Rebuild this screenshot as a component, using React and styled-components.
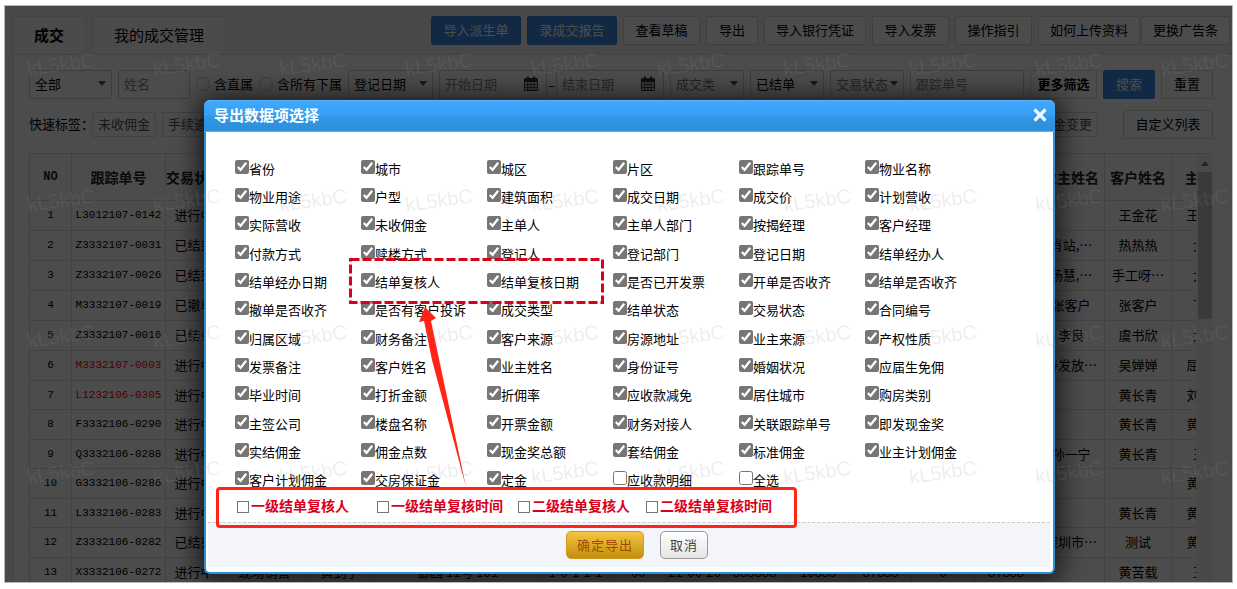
import styled, { createGlobalStyle } from 'styled-components';

const GlobalStyle = createGlobalStyle`
    * {
        box-sizing: border-box;
    }

    body {
        margin: 0;
        background: #fff;
        color: #000;
        font: 13px/18px 'Noto Sans CJK SC', sans-serif;
        overflow: hidden;
    }

    button,
    input,
    select {
        margin: 0;
        font: inherit;
    }
`;

const Frame = styled.div`
    position: relative;
    height: calc(100vh - 11px);
    margin: 5px 4px 6px;
    border: 1px solid #b4bab4;
    background: #f0f0f0;
    overflow: hidden;
`;

const TopBar = styled.header`
    display: flex;
    justify-content: space-between;
    height: 48px;
    padding: 10px 2px 0 8px;
`;

const Tabs = styled.nav`
    display: flex;
    gap: 8px;
`;

const Tab = styled.a`
    display: flex;
    align-items: center;
    height: 38px;
    padding: 0 20px 2px;
    border: 1px solid #e8e8e8;
    border-bottom: 0;
    background: #fcfcfc;
    color: #000;
    font-size: 15px;
    font-weight: ${(props) => (props.$active ? 'bold' : 'normal')};
    text-decoration: none;
`;

const Actions = styled.div`
    display: flex;
    gap: 6px;

    & > :last-child {
        margin-left: -5px;
    }
`;

const Button = styled.button`
    flex: none;
    width: ${(props) => props.$width}px;
    height: 29px;
    padding: 0 0 2px;
    border: 1px solid ${(props) => (props.$primary ? '#3a80d8' : '#d8d8d8')};
    border-radius: 2px;
    background: ${(props) => (props.$primary ? '#3a8ae6' : '#fff')};
    color: ${(props) => (props.$primary ? '#fff' : '#000')};
    font-weight: ${(props) => (props.$bold ? 'bold' : 'normal')};
    white-space: nowrap;
`;

const Panel = styled.main`
    margin-left: 8px;
    padding: 15px 19px 0 15px;
    border: 1px solid #e2e2e2;
    border-right: 0;
    background: #fff;
`;

const FilterRow = styled.form`
    display: flex;
    align-items: center;
    gap: 6px;
`;

const Field = styled.div`
    display: flex;
    align-items: center;
    flex: none;
    width: ${(props) => props.$width}px;
    height: 29px;
    padding: 0 5px 2px;
    border: 1px solid #cecece;
    border-radius: 2px;
    color: ${(props) => (props.$muted ? '#777' : '#000')};
`;

const Select = styled.select`
    width: 100%;
    padding: 0;
    border: 0;
    appearance: none;
    background: none;
    color: inherit;
    outline: 0;
`;

const Caret = styled.span`
    flex: none;
    border: 4px solid transparent;
    border-top: 5px solid #555;
    border-bottom: 0;
`;

const TextInput = styled.input`
    width: 100%;
    min-width: 0;
    padding: 0;
    border: 0;
    background: none;
    outline: 0;

    &::placeholder {
        color: #888;
        opacity: 1;
    }
`;

const GrowField = styled(Field)`
    flex: 1;
    min-width: 60px;
`;

const CalendarSvg = styled.svg`
    flex: none;
    margin-right: 3px;
`;

const DateRange = styled.div`
    display: flex;
    align-items: center;
    gap: 1px;
`;

const Scope = styled.div`
    display: flex;
    gap: 6px;
    width: 146px;
`;

const ScopeLabel = styled.label`
    display: flex;
    align-items: center;
    gap: 4px;
    padding-bottom: 2px;
    white-space: nowrap;
`;

const Radio = styled.input`
    appearance: none;
    width: 14px;
    height: 14px;
    border: 1px solid #ccc;
    border-radius: 50%;
`;

const TagRow = styled.div`
    display: flex;
    align-items: center;
    gap: 6px;
    margin-top: 11px;
`;

const TagTitle = styled.span`
    width: 57px;
    padding-bottom: 2px;
    white-space: nowrap;
`;

const Tag = styled.button`
    width: 64px;
    height: 25px;
    padding: 0 0 2px;
    border: 1px solid #ddd;
    background: #fff;
    color: #555;

    &:last-of-type {
        margin-left: auto;
    }
`;

const TagList = styled.div`
    display: flex;
    flex: 1;
    gap: 6px;
    margin-right: 19px;
`;

const TableArea = styled.section`
    display: flex;
    margin-top: 14px;
    border-top: 1px solid #ddd;
    border-left: 1px solid #ddd;
`;

const TableClip = styled.div`
    flex: 1;
    min-width: 0;
    overflow: hidden;
`;

const Table = styled.table`
    width: 1211px;
    table-layout: fixed;
    border-collapse: separate;
    border-spacing: 0;
    text-align: center;
`;

const HeadCell = styled.th`
    height: 47px;
    padding: 0;
    border-right: 1px solid #ddd;
    border-bottom: 1px solid #ddd;
    color: #222;
    font: bold 14px/18px 'Noto Sans CJK SC', sans-serif;
    white-space: nowrap;

    &:first-child {
        font: bold 12px/18px 'Liberation Mono', monospace;
    }
`;

const Row = styled.tr`
    height: 30px;

    &:nth-child(2n + 7) {
        height: 29px;
    }
`;

const Cell = styled.td`
    padding: 0 0 1px;
    border-right: 1px solid #ddd;
    border-bottom: 1px solid #ddd;
    line-height: 18px;
    white-space: nowrap;
`;

const CodeCell = styled(Cell)`
    color: ${(props) => (props.$alert ? '#f00' : '#000')};
    font: 11px/18px 'Liberation Mono', monospace;
`;

const ScrollTrack = styled.div`
    display: flex;
    flex-direction: column;
    align-items: center;
    gap: 6px;
    width: 17px;
    padding-top: 7px;
    background: #f4f4f4;
`;

const ScrollUp = styled.span`
    border: 4px solid transparent;
    border-top: 0;
    border-bottom: 5px solid #777;
`;

const ScrollThumb = styled.div`
    width: 14px;
    height: 147px;
    background: #c4c4c4;
`;

const Backdrop = styled.div`
    position: absolute;
    inset: 0;
    background: rgba(0, 0, 0, 0.7);
`;

const Dialog = styled.div`
    position: absolute;
    top: 94px;
    left: 199px;
    display: flex;
    flex-direction: column;
    width: 851px;
    height: 474px;
    border: 2px solid #2c92d2;
    border-top: 0;
    border-radius: 6px;
    background: #fff;
    box-shadow: 0 2px 24px 6px rgba(0, 0, 0, 0.65);
`;

const DialogHeader = styled.div`
    display: flex;
    align-items: center;
    justify-content: space-between;
    flex: none;
    height: 32px;
    margin: 0 -2px;
    padding: 0 8px 2px 10px;
    border-top: 1px solid #5cb4f8;
    border-bottom: 1px solid #62b0ec;
    border-radius: 6px 6px 0 0;
    background: linear-gradient(#41a8ff, #359df2 50%, #3296e4 52%, #2c8fdc);
    color: #fff;
    font-size: 15px;
    font-weight: bold;
`;

const CloseButton = styled.button`
    display: flex;
    padding: 0;
    border: 0;
    background: none;
`;

const OptionGrid = styled.div`
    display: grid;
    grid-template-columns: repeat(6, 126px);
    grid-template-rows: repeat(4, 28px 28px 29px);
    padding: 28px 0 0 29px;
`;

const Option = styled.label`
    display: flex;
    align-items: flex-start;
    white-space: nowrap;
`;

const OptionBox = styled.input`
    width: 14px;
    height: 14px;
    accent-color: #767676;
`;

const ReviewRow = styled.div`
    display: grid;
    grid-template-columns: 140px 141px 128px auto;
    justify-content: start;
    align-items: center;
    width: 581px;
    height: 41px;
    margin: -13px 0 0 10px;
    padding: 0 0 2px 18px;
    border: 3px solid #ff2416;
    border-radius: 4px;
    z-index: 1;
`;

const ReviewOption = styled.label`
    display: flex;
    align-items: center;
    gap: 2px;
    color: #d9001b;
    font-size: 14px;
    font-weight: bold;
    white-space: nowrap;
`;

const ReviewBox = styled.input`
    appearance: none;
    width: 12px;
    height: 12px;
    border: 1px solid #777;
    background: #fff;
`;

const ReviewText = styled.span`
    padding-bottom: 3px;
`;

const DialogFooter = styled.div`
    display: flex;
    justify-content: center;
    gap: 16px;
    height: 45px;
    margin: -6px 3px 0 2px;
    padding: 8px 0 0 16px;
    border-top: 1px dashed #ccc;
    background: #f3f5fa;
`;

const FooterButton = styled.button`
    height: 28px;
    padding: 0;
    border-radius: 5px;
    letter-spacing: 1px;
`;

const ConfirmButton = styled(FooterButton)`
    width: 78px;
    border: 1px solid #d49a20;
    background: linear-gradient(#f5c443, #c1900c);
    color: #a34a00;
`;

const CancelButton = styled(FooterButton)`
    width: 48px;
    border: 1px solid #999;
    background: linear-gradient(#fff, #e4e4e4);
    color: #444;
`;

const Callout = styled.svg`
    position: absolute;
    top: 152px;
    left: 143px;
    pointer-events: none;
`;

const Watermarks = styled.div`
    position: absolute;
    top: -10px;
    left: 22px;
    display: grid;
    grid-template-columns: repeat(10, 126px);
    grid-auto-rows: 136px;
    align-items: center;
    pointer-events: none;
`;

const Mark = styled.span`
    width: 70px;
    color: rgba(140, 140, 140, 0.16);
    font: 20px/24px 'Liberation Sans', sans-serif;
    transform: rotate(-8deg);
`;

const actions = [
    { label: '导入派生单', width: 90, primary: true },
    { label: '录成交报告', width: 90, primary: true },
    { label: '查看草稿', width: 77 },
    { label: '导出', width: 52 },
    { label: '导入银行凭证', width: 102 },
    { label: '导入发票', width: 77 },
    { label: '操作指引', width: 77 },
    { label: '如何上传资料', width: 102 },
    { label: '更换广告条', width: 89 },
];

const columns = [
    ['NO', 42],
    ['跟踪单号', 94],
    ['交易状态', 57],
    ['部门', 84],
    ['主单人', 67],
    ['物业地址', 168],
    ['房号', 68],
    ['面积', 57],
    ['成交日期', 56],
    ['成交价', 64],
    ['佣金', 63],
    ['应收', 62],
    ['已收', 63],
    ['未收', 63],
    ['业主姓名', 67],
    ['客户姓名', 67],
    ['主单人', 69],
];

const deals = [
    ['L3012107-0142', '进行中', '', '王金花', '王金花'],
    ['Z3332107-0031', '已结束', '肖站,…', '热热热', '大力'],
    ['Z3332107-0026', '已结束', '杨慧,…', '手工呀…', '大力'],
    ['M3332107-0019', '已撤单', '张客户', '张客户', '丁一'],
    ['Z3332107-0016', '已结束', '李良', '虞书欣', '大力'],
    ['M3332107-0003', '进行中', '待发放…', '吴婵婵', '屈小平'],
    ['L1232106-0305', '进行中', '', '黄长青', '刘大伟'],
    ['F3332106-0290', '进行中', '', '黄长青', '黄长青'],
    ['Q3332106-0288', '进行中', '孙一宁', '黄长青', '王一'],
    ['G3332106-0286', '进行中', '', '', '黄长青'],
    ['L3332106-0283', '进行中', '', '黄长青', '黄长青'],
    ['Z3332106-0282', '已结束', '深圳市…', '测试', '黄长青'],
    ['X3332106-0272', '进行中', '', '黄苦载', '王一'],
];

const lastDealDetails = [
    '现场销售',
    '黄到宁',
    '御园 11号 101',
    '1-0-1-1-1',
    '66',
    '21-06-26',
    '888888',
    '10888',
    '87888',
    '0',
    '87888',
];

const overdue = ['M3332107-0003', 'L1232106-0305'];

const options = [
    '省份', '城市', '城区', '片区', '跟踪单号', '物业名称',
    '物业用途', '户型', '建筑面积', '成交日期', '成交价', '计划营收',
    '实际营收', '未收佣金', '主单人', '主单人部门', '按揭经理', '客户经理',
    '付款方式', '赎楼方式', '登记人', '登记部门', '登记日期', '结单经办人',
    '结单经办日期', '结单复核人', '结单复核日期', '是否已开发票', '开单是否收齐', '结单是否收齐',
    '撤单是否收齐', '是否有客户投诉', '成交类型', '结单状态', '交易状态', '合同编号',
    '归属区域', '财务备注', '客户来源', '房源地址', '业主来源', '产权性质',
    '发票备注', '客户姓名', '业主姓名', '身份证号', '婚姻状况', '应届生免佣',
    '毕业时间', '打折金额', '折佣率', '应收款减免', '居住城市', '购房类别',
    '主签公司', '楼盘名称', '开票金额', '财务对接人', '关联跟踪单号', '即发现金奖',
    '实结佣金', '佣金点数', '现金奖总额', '套结佣金', '标准佣金', '业主计划佣金',
    '客户计划佣金', '交房保证金', '定金', '应收款明细', '全选',
];

const unchecked = ['应收款明细', '全选'];

const reviewOptions = [
    '一级结单复核人',
    '一级结单复核时间',
    '二级结单复核人',
    '二级结单复核时间',
];

const Dropdown = ({ label, width, muted }) => (
    <Field $width={width} $muted={muted}>
        <Select aria-label={label}>
            <option>{label}</option>
        </Select>
        <Caret />
    </Field>
);

const CalendarIcon = () => (
    <CalendarSvg width="14" height="15" viewBox="0 0 14 15">
        <path
            d="M1.5 2H3V.5h2V2h4V.5h2V2h1.500q1.500 0 1.500 1.500v10q0 1.500-1.500 1.500h-11Q0 15 0 13.500v-10Q0 2 1.500 2z"
            fill="#333"
        />
        <path
            d="M1 6h2.300v2.200H1zM4.200 6h2.300v2.200H4.200zM7.400 6h2.300v2.200H7.400zM10.600 6H13v2.200h-2.400zM1 9h2.300v2.200H1zM4.200 9h2.300v2.200H4.200zM7.400 9h2.300v2.200H7.400zM10.600 9H13v2.200h-2.400zM1 12h2.300v2H1zM4.200 12h2.300v2H4.200zM7.400 12h2.300v2H7.400zM10.600 12H13v2h-2.400z"
            fill="#ddd"
        />
    </CalendarSvg>
);

const DateField = ({ label }) => (
    <Field $width={108}>
        <TextInput placeholder={label} aria-label={label} />
        <CalendarIcon />
    </Field>
);

const Filters = () => (
    <FilterRow>
        <Dropdown label="全部" width={83} />
        <Field $width={72}>
            <TextInput placeholder="姓名" aria-label="姓名" />
        </Field>
        <Scope>
            <ScopeLabel>
                <Radio type="radio" name="scope" />
                含直属
            </ScopeLabel>
            <ScopeLabel>
                <Radio type="radio" name="scope" />
                含所有下属
            </ScopeLabel>
        </Scope>
        <Dropdown label="登记日期" width={85} />
        <DateRange>
            <DateField label="开始日期" />
            <span>–</span>
            <DateField label="结束日期" />
        </DateRange>
        <Dropdown label="成交类" width={74} muted />
        <Dropdown label="已结单" width={74} />
        <Dropdown label="交易状态" width={74} muted />
        <GrowField>
            <TextInput placeholder="跟踪单号" aria-label="跟踪单号" />
        </GrowField>
        <Button type="button" $width={67} $bold>
            更多筛选
        </Button>
        <Button type="button" $width={52} $primary>
            搜索
        </Button>
        <Button type="reset" $width={52}>
            重置
        </Button>
    </FilterRow>
);

const DealTable = () => (
    <TableArea>
        <TableClip>
            <Table>
                <colgroup>
                    {columns.map(([name, width], index) => (
                        <col key={name + index} style={{ width }} />
                    ))}
                </colgroup>
                <thead>
                    <tr>
                        {columns.map(([name], index) => (
                            <HeadCell key={name + index}>{name}</HeadCell>
                        ))}
                    </tr>
                </thead>
                <tbody>
                    {deals.map(([code, state, owner, client, agent], index) => (
                        <Row key={code}>
                            <CodeCell>{index + 1}</CodeCell>
                            <CodeCell $alert={overdue.includes(code)}>
                                {code}
                            </CodeCell>
                            <Cell>{state}</Cell>
                            {lastDealDetails.map((text, i) => (
                                <Cell key={i}>
                                    {index === deals.length - 1 ? text : ''}
                                </Cell>
                            ))}
                            <Cell>{owner}</Cell>
                            <Cell>{client}</Cell>
                            <Cell>{agent}</Cell>
                        </Row>
                    ))}
                </tbody>
            </Table>
        </TableClip>
        <ScrollTrack>
            <ScrollUp />
            <ScrollThumb />
        </ScrollTrack>
    </TableArea>
);

const ExportDialog = () => (
    <Dialog role="dialog" aria-label="导出数据项选择">
        <DialogHeader>
            <span>导出数据项选择</span>
            <CloseButton aria-label="关闭">
                <svg width="14" height="14" viewBox="0 0 14 14">
                    <path
                        d="M1.5 1.5l11 11M12.5 1.5l-11 11"
                        stroke="#eef6ff"
                        strokeWidth="3.2"
                    />
                </svg>
            </CloseButton>
        </DialogHeader>
        <OptionGrid>
            {options.map((name) => (
                <Option key={name}>
                    <OptionBox
                        type="checkbox"
                        defaultChecked={!unchecked.includes(name)}
                    />
                    {name}
                </Option>
            ))}
        </OptionGrid>
        <ReviewRow>
            {reviewOptions.map((name) => (
                <ReviewOption key={name}>
                    <ReviewBox type="checkbox" />
                    <ReviewText>{name}</ReviewText>
                </ReviewOption>
            ))}
        </ReviewRow>
        <DialogFooter>
            <ConfirmButton>确定导出</ConfirmButton>
            <CancelButton>取消</CancelButton>
        </DialogFooter>
        <Callout width="260" height="240" viewBox="0 0 260 240">
            <rect
                x="1.5"
                y="7.5"
                width="252"
                height="43"
                fill="none"
                stroke="#d9001b"
                strokeWidth="3"
                strokeDasharray="9 3"
            />
            <path
                d="M76 55L87 66L82 69L117 235L83 108L75 69L70 70z"
                fill="#ff2416"
            />
        </Callout>
    </Dialog>
);

const App = () => (
    <>
        <GlobalStyle />
        <Frame lang="zh-CN">
            <TopBar>
                <Tabs>
                    <Tab href="#deals" $active>
                        成交
                    </Tab>
                    <Tab href="#manage">我的成交管理</Tab>
                </Tabs>
                <Actions>
                    {actions.map(({ label, width, primary }) => (
                        <Button key={label} $width={width} $primary={primary}>
                            {label}
                        </Button>
                    ))}
                </Actions>
            </TopBar>
            <Panel>
                <Filters />
                <TagRow>
                    <TagTitle>快速标签：</TagTitle>
                    <TagList>
                        <Tag>未收佣金</Tag>
                        <Tag>手续逾期</Tag>
                        <Tag>佣金变更</Tag>
                    </TagList>
                    <Button $width={90}>自定义列表</Button>
                </TagRow>
                <DealTable />
            </Panel>
            <Backdrop />
            <ExportDialog />
            <Watermarks aria-hidden="true">
                {Array.from({ length: 40 }, (_, index) => (
                    <Mark key={index}>kL5kbC</Mark>
                ))}
            </Watermarks>
        </Frame>
    </>
);

export default App;
